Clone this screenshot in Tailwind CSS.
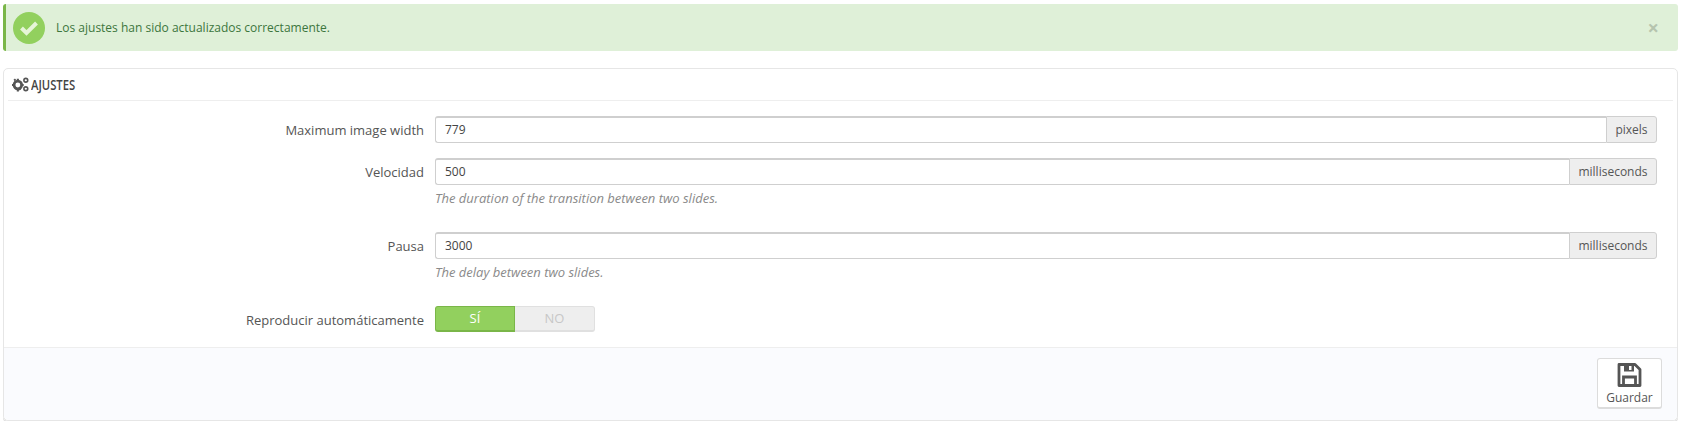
<!DOCTYPE html>
<html lang="es"><head><meta charset="utf-8"><title>Ajustes</title>
<script src="https://cdn.jsdelivr.net/npm/@tailwindcss/browser@4"></script></head>
<body class="bg-white font-['Open_Sans',sans-serif] text-[12px] text-[#555] overflow-hidden">
<div class="pl-[3px] pr-[7px] pt-1">
  <div class="h-[47px] flex items-center bg-[#dff0d8] border-l-[3px] border-[#7ab648] rounded-[3px] pl-[7px] pr-[19px] text-[#3c763d]">
    <span class="w-8 h-8 rounded-full bg-[#92d05e] flex items-center justify-center shrink-0">
      <svg width="20" height="16" viewBox="0 0 20 16"><path d="M2.5 8 L7.5 13 L17.5 3" fill="none" stroke="#e6f5d8" stroke-width="4"/></svg>
    </span>
    <span class="ml-[11px] grow">Los ajustes han sido actualizados correctamente.</span>
    <span class="text-[#b5c4ae] text-[20px] font-bold leading-none">×</span>
  </div>
  <div class="mt-[17px] border border-[#e6e6e6] rounded-[5px] shadow-[0_2px_0_#e0e0e0] px-[4px] pt-0 flex flex-col">
    <div class="h-[32px] flex items-center border-b border-[#eeeeee] pl-[4px] text-[#444]">
      <svg width="17" height="15" viewBox="0 0 16 14" fill="#555">
        <circle cx="5.5" cy="7.5" r="3.6" fill="none" stroke="#555" stroke-width="2.6"/>
        <path d="M4.5 1.5h2v2h-2zM4.5 11.5h2v2h-2zM0 6.5h2v2H0zM9 6.5h2v2H9zM1.4 2.6l1.4-1.2 1.2 1.4-1.4 1.2zM8.6 11.4l-1.4 1.2-1.2-1.4 1.4-1.2z"/>
        <circle cx="13" cy="3" r="1.8" fill="none" stroke="#555" stroke-width="1.5"/>
        <circle cx="13" cy="11" r="1.8" fill="none" stroke="#555" stroke-width="1.5"/>
      </svg>
      <span class="ml-[2px] text-[15px] font-semibold origin-left scale-x-[0.75] inline-block">AJUSTES</span>
    </div>
    <div class="pt-[15px] pl-[427px] pr-[16px] flex flex-col">
      <div class="relative flex h-[27px]">
        <label class="absolute right-full mr-[11px] w-[300px] text-right text-[13px] leading-[27px] top-[1px]">Maximum image width</label>
        <div class="grow flex items-center pl-[9px] border border-t-2 border-r-0 border-[#cfcfcf] rounded-l-[3px] text-[#444]">779</div>
        <div class="w-[51px] flex items-center justify-center bg-[#eeeeee] border border-[#cfcfcf] rounded-r-[3px] text-[#555]">pixels</div>
      </div>
      <div class="relative flex h-[27px] mt-[15px]">
        <label class="absolute right-full mr-[11px] w-[300px] text-right text-[13px] leading-[27px] top-[1px]">Velocidad</label>
        <div class="grow flex items-center pl-[9px] border border-t-2 border-r-0 border-[#cfcfcf] rounded-l-[3px] text-[#444]">500</div>
        <div class="w-[88px] flex items-center justify-center bg-[#eeeeee] border border-[#cfcfcf] rounded-r-[3px] text-[#555]">milliseconds</div>
      </div>
      <p class="mt-[5px] h-[42px] italic text-[13px] text-[#8a8a8a] leading-[17px]">The duration of the transition between two slides.</p>
      <div class="relative flex h-[27px]">
        <label class="absolute right-full mr-[11px] w-[300px] text-right text-[13px] leading-[27px] top-[1px]">Pausa</label>
        <div class="grow flex items-center pl-[9px] border border-t-2 border-r-0 border-[#cfcfcf] rounded-l-[3px] text-[#444]">3000</div>
        <div class="w-[88px] flex items-center justify-center bg-[#eeeeee] border border-[#cfcfcf] rounded-r-[3px] text-[#555]">milliseconds</div>
      </div>
      <p class="mt-[5px] h-[42px] italic text-[13px] text-[#8a8a8a] leading-[17px]">The delay between two slides.</p>
      <div class="relative flex h-[26px] w-[160px]">
        <label class="absolute right-full mr-[11px] w-[300px] text-right text-[13px] leading-[27px] top-[1px] whitespace-nowrap">Reproducir automáticamente</label>
        <div class="w-[80px] flex items-center justify-center bg-[#92d05e] border border-[#7ab648] border-b-2 rounded-l-[3px] text-white text-[13px]">SÍ</div>
        <div class="w-[80px] flex items-center justify-center bg-[#eeeeee] border border-[#e0e0e0] border-l-0 border-b-2 rounded-r-[3px] text-[#c7c7c7] text-[13px]">NO</div>
      </div>
    </div>
    <div class="mt-[15px] -mx-[4px] h-[73px] bg-[#fafbfe] border-t border-[#eeeeee] rounded-b-[5px] flex justify-end items-start pt-[10px] pr-[15px]">
      <button class="w-[65px] h-[51px] bg-white border border-[#dcdcdc] border-b-2 rounded-[3px] flex flex-col items-center pt-[3px] text-[#555]">
        <svg width="25" height="26" viewBox="0 0 25 25" fill="none">
          <path d="M2 2h16l5 5v16H2z" stroke="#555" stroke-width="2.8" stroke-linejoin="round"/>
          <path d="M7 2.5h10v6.5H7z" fill="#555"/><rect x="12" y="3.5" width="2.5" height="4" fill="#fff"/>
          <path d="M6.5 23v-8.5h12V23" stroke="#555" stroke-width="2.8"/>
        </svg>
        <span class="mt-[2px] leading-[16px]">Guardar</span>
      </button>
    </div>
  </div>
</div>
</body></html>
